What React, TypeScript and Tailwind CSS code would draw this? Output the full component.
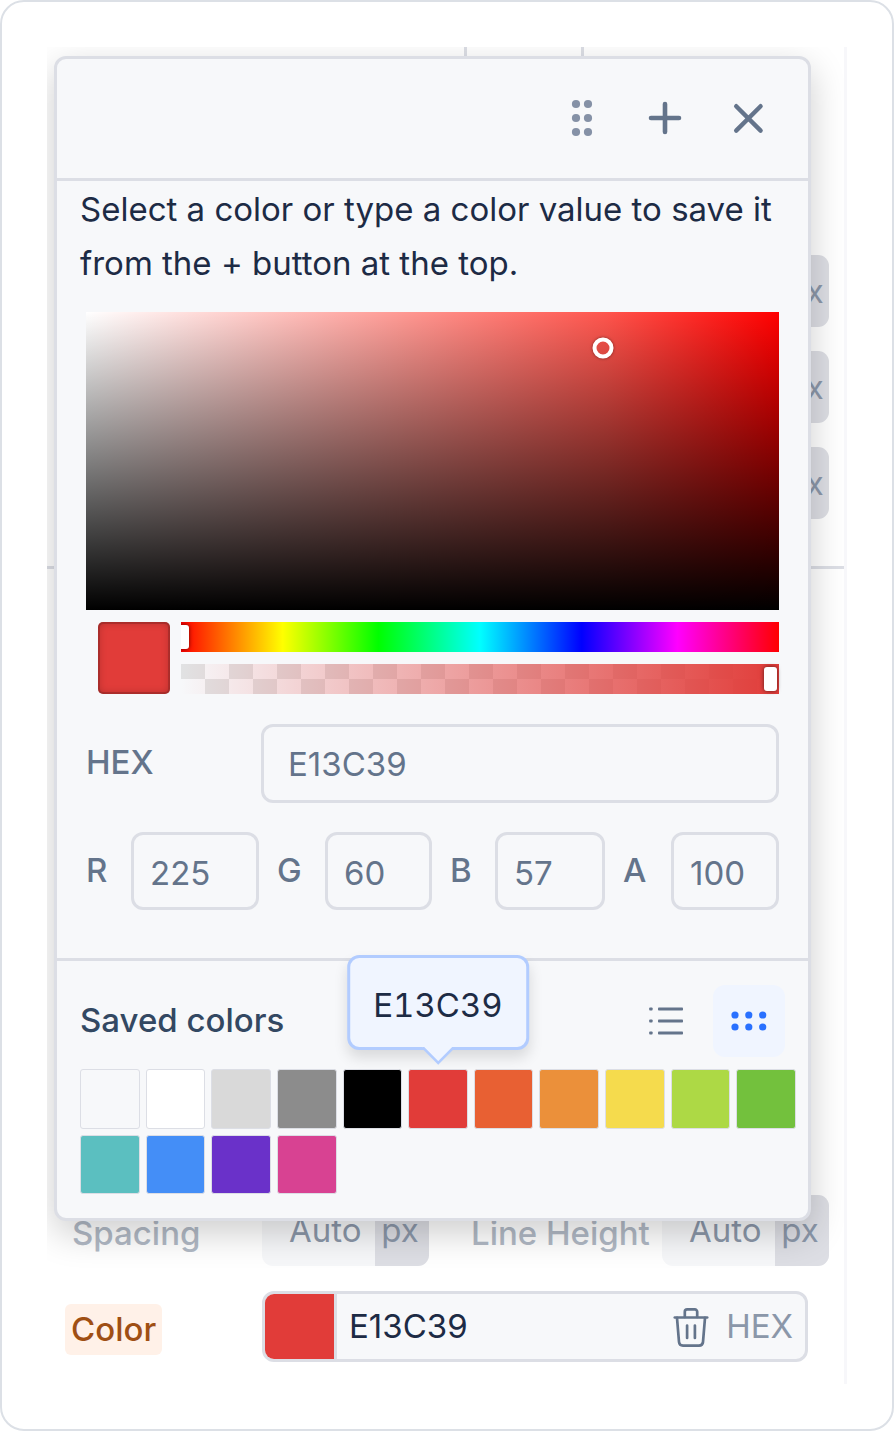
import { useState } from "react";
import type { ReactNode } from "react";

const savedColors = [
  "F7F8FA",
  "FFFFFF",
  "D9D9D9",
  "8C8C8C",
  "000000",
  "E13C39",
  "E86033",
  "EB903A",
  "F5DB4D",
  "ADD945",
  "73C13D",
  "5BBFC0",
  "448EF7",
  "6A31C9",
  "D84292",
];

const channels = [
  { label: "R", value: "225", labelClass: "w-[45px]", inputClass: "w-32" },
  { label: "G", value: "60", labelClass: "w-12", inputClass: "w-[107px]" },
  { label: "B", value: "57", labelClass: "w-[45px]", inputClass: "w-[110px]" },
  { label: "A", value: "100", labelClass: "w-12", inputClass: "flex-1" },
];

const sliderClass = [
  "block h-full min-w-0 flex-1 cursor-pointer appearance-none bg-transparent",
  "[&::-webkit-slider-thumb]:h-6 [&::-webkit-slider-thumb]:w-[13px]",
  "[&::-webkit-slider-thumb]:appearance-none [&::-webkit-slider-thumb]:rounded-[3px]",
  "[&::-webkit-slider-thumb]:bg-white [&::-webkit-slider-thumb]:shadow-[0_0_4px_rgba(0,0,0,0.6)]",
].join(" ");

function GripIcon() {
  return (
    <svg width="36" height="40" viewBox="0 0 36 40" fill="#8591A6">
      {[6, 20, 34].map((y) => (
        <g key={y}>
          <circle cx="12" cy={y} r="4.1" />
          <circle cx="24" cy={y} r="4.1" />
        </g>
      ))}
    </svg>
  );
}

function PlusIcon() {
  return (
    <svg width="36" height="36" viewBox="0 0 36 36" fill="none" stroke="#64748B" strokeWidth="4.6" strokeLinecap="round">
      <path d="M18 4v28M4 18h28" />
    </svg>
  );
}

function CloseIcon() {
  return (
    <svg width="36" height="36" viewBox="0 0 36 36" fill="none" stroke="#64748B" strokeWidth="4.4" strokeLinecap="round">
      <path d="M6.2 6.2l24.4 24.4M30.6 6.2L6.2 30.6" />
    </svg>
  );
}

function ListIcon() {
  return (
    <svg width="36" height="30" viewBox="0 0 36 30" fill="#64748B">
      {[1.5, 13.5, 25.5].map((y) => (
        <g key={y}>
          <rect x="1.2" y={y} width="3.4" height="3" rx="0.8" />
          <rect x="10" y={y} width="25" height="3" rx="0.8" />
        </g>
      ))}
    </svg>
  );
}

function GridIcon() {
  return (
    <svg width="40" height="24" viewBox="0 0 40 24" fill="#2970FF">
      {[6, 19.8, 33.7].map((x) => (
        <g key={x}>
          <circle cx={x} cy="6" r="3.6" />
          <circle cx={x} cy="18" r="3.6" />
        </g>
      ))}
    </svg>
  );
}

function TrashIcon() {
  return (
    <svg
      width="36"
      height="42"
      viewBox="0 0 36 42"
      fill="none"
      stroke="#64748B"
      strokeWidth="2.7"
      strokeLinecap="round"
      strokeLinejoin="round"
    >
      <path d="M1.8 11.5h32.4" />
      <path d="M11.8 11V5.8a2.4 2.4 0 0 1 2.4-2.4h7.6a2.4 2.4 0 0 1 2.4 2.4V11" />
      <path d="M4 11.8l2 24.2a4 4 0 0 0 4 3.6h16a4 4 0 0 0 4-3.6l2-24.2" />
      <path d="M14.1 19.5V32M21.9 19.5V32" />
    </svg>
  );
}

function IconButton({ label, children }: { label: string; children: ReactNode }) {
  return (
    <button type="button" aria-label={label} className="flex size-[60px] items-center justify-center rounded-lg">
      {children}
    </button>
  );
}

function UnitField({ id, label }: { id: string; label: string }) {
  return (
    <>
      <label htmlFor={id} className="pt-[13px] pl-[7px] leading-[51px] font-medium whitespace-nowrap text-[#B1B9C5]">
        {label}
      </label>
      <div className="flex h-[71px] overflow-hidden rounded-[11px] bg-[#F6F7F9] text-[#8B97A9]">
        <input id={id} defaultValue="Auto" className="w-[113px] min-w-0 pl-[27px] outline-none" />
        <span className="flex flex-1 items-center justify-center bg-[#DDDEE4] pr-1">px</span>
      </div>
    </>
  );
}

function SavedColor({ color, active }: { color: string; active: boolean }) {
  return (
    <button
      type="button"
      aria-label={`#${color}`}
      className="relative aspect-square rounded-[3px] border border-[#DCDEE5]"
      style={{ backgroundColor: `#${color}` }}
    >
      {active && (
        <span
          role="tooltip"
          className="absolute bottom-full left-1/2 z-10 mb-5 -translate-x-1/2 rounded-xl border-3 border-[#B2CCFF] bg-[#F0F5FF] px-[23px] pt-5 pb-3.5 leading-[55px] text-[#1D2B45] tabular-nums shadow-[0_8px_14px_rgba(0,0,0,0.12)]"
        >
          {color}
          <svg className="absolute top-full left-1/2 -translate-x-1/2" width="32" height="18" viewBox="0 0 32 18">
            <path d="M0 0h32L16 16z" fill="#F0F5FF" />
            <path d="M0 1.3h1.5L16 16L30.5 1.3H32" fill="none" stroke="#B2CCFF" strokeWidth="2.5" />
          </svg>
        </span>
      )}
    </button>
  );
}

function ColorPopover() {
  const [hex, setHex] = useState("E13C39");
  const [hue, setHue] = useState(0);
  const [alpha, setAlpha] = useState(100);

  return (
    <div
      role="dialog"
      aria-label="Color picker"
      className="absolute top-[9px] right-[33px] left-[7px] rounded-xl border-3 border-[#DCDEE5] bg-[#F7F8FA] shadow-[0_12px_36px_rgba(0,0,0,0.2)]"
    >
      <header className="flex h-[122px] items-center justify-end gap-[23px] border-b-3 border-[#DCDEE5] pr-[30px] pb-[2px]">
        <IconButton label="Move">
          <GripIcon />
        </IconButton>
        <IconButton label="Save color">
          <PlusIcon />
        </IconButton>
        <IconButton label="Close">
          <CloseIcon />
        </IconButton>
      </header>

      <p className="px-[23px] pt-px leading-[54px] text-[#1D2B45]">
        Select a color or type a color value to save it from the + button at the top.
      </p>

      <div className="px-[29px] pt-[22px] pb-12">
        {/* Saturation / brightness area */}
        <div className="relative h-[298px] bg-[linear-gradient(to_top,#000,transparent),linear-gradient(to_right,#fff,#ff9a94_45%,#ff554d_75%,#f00)]">
          <span className="absolute top-[12%] left-[74.6%] size-[21px] -translate-1/2 rounded-full border-4 border-white shadow-[0_0_3px_rgba(0,0,0,0.5)]" />
        </div>

        <div className="flex gap-[11px] pt-3 pl-3">
          <div className="size-[72px] rounded-[5px] bg-[#E13C39] shadow-[inset_0_0_0_2px_rgba(0,0,0,0.15),inset_0_0_8px_rgba(0,0,0,0.25)]" />
          <div className="flex flex-1 flex-col gap-3">
            <div className="flex h-[30px] overflow-hidden bg-[linear-gradient(to_right,#f00,#ff0_17%,#0f0_33%,#0ff_50%,#00f_67%,#f0f_83%,#f00)]">
              <input
                type="range"
                aria-label="Hue"
                min={0}
                max={360}
                value={hue}
                onChange={(e) => setHue(Number(e.target.value))}
                className={`${sliderClass} -ml-[5px]`}
              />
            </div>
            <div className="flex h-[30px] bg-[linear-gradient(to_right,#E13C3900,#E13C39),repeating-conic-gradient(#F7F8FA_0_25%,#E1E2E3_0_50%)] bg-[size:100%_100%,48px_30px]">
              <input
                type="range"
                aria-label="Opacity"
                min={0}
                max={100}
                value={alpha}
                onChange={(e) => setAlpha(Number(e.target.value))}
                className={`${sliderClass} mr-[2px]`}
              />
            </div>
          </div>
        </div>

        <div className="flex pt-[30px] text-[#64748B]">
          <label htmlFor="hex" className="w-[175px] leading-[76px] font-medium">
            HEX
          </label>
          <input
            id="hex"
            value={hex}
            onChange={(e) => setHex(e.target.value)}
            className="h-[79px] min-w-0 flex-1 rounded-xl border-3 border-[#DCDEE5] pl-6 outline-none"
          />
        </div>

        <div className="flex gap-[18px] pt-[29px] text-[#64748B]">
          {channels.map((channel) => (
            <div key={channel.label} className="flex min-w-0 last:flex-1">
              <label htmlFor={channel.label} className={`${channel.labelClass} leading-[76px] font-medium`}>
                {channel.label}
              </label>
              <input
                id={channel.label}
                defaultValue={channel.value}
                className={`${channel.inputClass} h-[78px] min-w-0 rounded-xl border-3 border-[#DCDEE5] pt-[3px] pl-4 outline-none`}
              />
            </div>
          ))}
        </div>
      </div>

      <div className="border-t-3 border-[#DCDEE5] pt-6 pb-6 pl-[23px]">
        <div className="flex h-[72px] items-center gap-[11px] pr-[23px]">
          <h2 className="flex-1 font-medium text-[#334862]">Saved colors</h2>
          <button type="button" aria-label="List view" className="flex size-[72px] items-center justify-center rounded-xl">
            <ListIcon />
          </button>
          <button
            type="button"
            aria-label="Grid view"
            className="flex size-[72px] items-center justify-center rounded-xl bg-[#F0F5FF]"
          >
            <GridIcon />
          </button>
        </div>
        <div className="grid grid-cols-11 gap-[6px] pt-3 pr-3">
          {savedColors.map((color) => (
            <SavedColor key={color} color={color} active={color === hex} />
          ))}
        </div>
      </div>
    </div>
  );
}

export default function App() {
  return (
    <main className="rounded-3xl border-2 border-[#DCE0E6] bg-white p-[45px] font-['Inter',sans-serif] text-[33px] [font-optical-sizing:none]">
      <section className="relative overflow-hidden border-r-3 border-[#F7F7FA] pb-[22px]">
        <div className="flex h-[208px] justify-center">
          <div className="ml-[156px] w-[120px] border-x-3 border-[#DCDEE5]" />
        </div>
        <div className="flex flex-col items-end gap-6 pr-[15px] text-[#8B97A9]">
          {["top", "middle", "bottom"].map((row) => (
            <span
              key={row}
              className="flex h-[72px] w-12 items-center justify-center rounded-r-[11px] bg-[#DDDEE4] pt-px"
            >
              px
            </span>
          ))}
        </div>
        <hr className="mt-[47px] border-t-3 border-[#DCDEE5]" />

        <div className="grid grid-cols-[197px_167px_1fr_167px] pt-[626px] pr-[15px] pl-[18px]">
          <UnitField id="spacing" label="Spacing" />
          <div className="col-span-2 flex justify-end [&>div]:w-[167px] [&>label]:flex-1 [&>label]:pl-[42px]">
            <UnitField id="line-height" label="Line Height" />
          </div>
        </div>

        <div className="flex pt-[25px] pr-9 pl-[18px]">
          <div className="w-[197px] pt-[13px]">
            <label
              htmlFor="color"
              className="inline-block rounded-md bg-[#FFF1E8] px-[6px] align-top leading-[51px] font-medium text-[#9F4F14]"
            >
              Color
            </label>
          </div>
          <div className="flex h-[71px] flex-1 items-center overflow-hidden rounded-xl border-3 border-[#DCDEE5] bg-[#F7F8FA]">
            <span className="h-full w-[72px] border-r-3 border-[#DCDEE5] bg-[#E13C39]" />
            <input id="color" defaultValue="E13C39" className="min-w-0 flex-1 pl-3 text-[#1D2B45] outline-none" />
            <button type="button" aria-label="Remove color">
              <TrashIcon />
            </button>
            <span className="pr-3 pl-[17px] text-[#8B97A9]">HEX</span>
          </div>
        </div>

        <ColorPopover />
      </section>
    </main>
  );
}
